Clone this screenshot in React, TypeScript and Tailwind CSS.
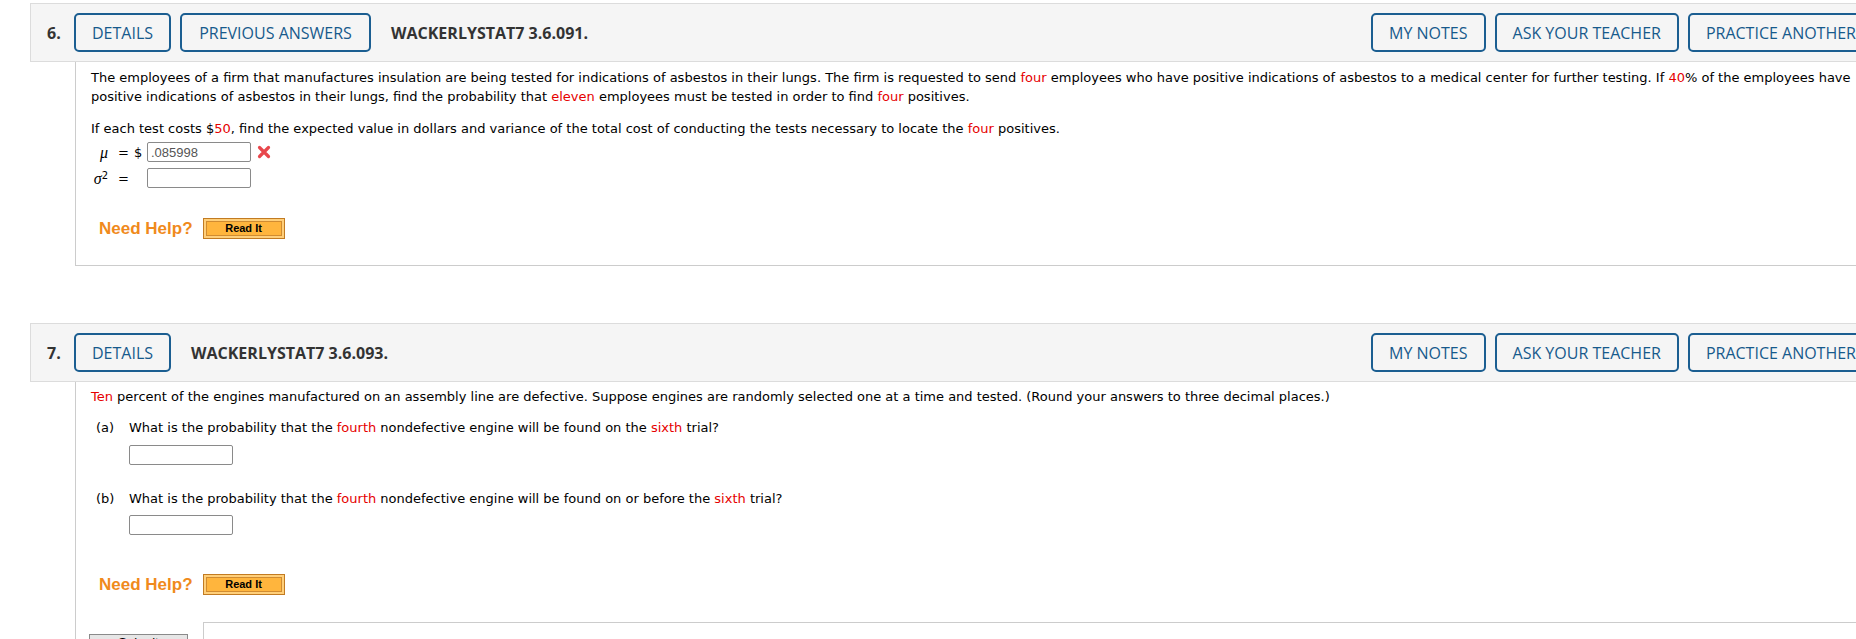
import React from 'react';

const Red = ({ children }: { children: React.ReactNode }) => (
  <span className="text-[#e60000]">{children}</span>
);

const HeadButton = ({ children, className = '' }: { children: React.ReactNode; className?: string }) => (
  <button
    type="button"
    className={`flex h-[39px] items-center justify-center rounded-[5px] border-2 border-[#1b5e91] px-[16px] text-[16px] text-[#175a8c] ${className}`}
  >
    {children}
  </button>
);

const QuestionHeader = ({ num, code, prev }: { num: number; code: string; prev?: boolean }) => (
  <div className="flex h-[59px] items-center border border-[#dcdcdc] bg-[#f5f5f5] pr-[25px] pl-[16px] font-['Open_Sans',sans-serif]">
    <span className="w-[27px] text-[16px] font-bold text-[#333]">{num}.</span>
    <HeadButton>DETAILS</HeadButton>
    {prev && <HeadButton className="ml-[9px] w-[191px]">PREVIOUS ANSWERS</HeadButton>}
    <span className="ml-[20px] text-[16px] font-bold text-[#333]">{code}</span>
    <div className="ml-auto flex gap-[9px]">
      <HeadButton>MY NOTES</HeadButton>
      <HeadButton>ASK YOUR TEACHER</HeadButton>
      <HeadButton>PRACTICE ANOTHER</HeadButton>
    </div>
  </div>
);

const AnswerBox = ({ value = '' }: { value?: string }) => (
  <input
    type="text"
    readOnly
    value={value}
    className="h-[20px] w-[104px] rounded-[2px] border border-[#8a8a8a] px-[3px] font-['Liberation_Sans',sans-serif] text-[13px] text-[#555]"
  />
);

const WrongMark = () => (
  <svg className="ml-[6px] h-[14px] w-[14px]" viewBox="0 0 14 14">
    <path d="M2.5 2.5l9 9M11.5 2.5l-9 9" stroke="#e8474c" strokeWidth={3.2} strokeLinecap="round" />
  </svg>
);

const NeedHelp = ({ className = '' }: { className?: string }) => (
  <div className={`flex items-center pl-[8px] ${className}`}>
    <span className="font-['Liberation_Sans',sans-serif] text-[17px] leading-[20px] font-bold text-[#f08a1c]">
      Need Help?
    </span>
    <span className="ml-[10px] flex h-[21px] w-[82px] border border-[#c27b22] bg-[#ffcf7a] p-[2px]">
      <span className="flex flex-1 items-center justify-center border border-[#d18c31] bg-[#ffb53d] font-['Liberation_Sans',sans-serif] text-[11px] font-bold text-black">
        Read It
      </span>
    </span>
  </div>
);

export default function App() {
  return (
    <div className="h-[639px] w-full overflow-hidden bg-white pt-[3px] pl-[30px]">
      <div className="w-[1870px]">
        {/* question 6 */}
        <QuestionHeader num={6} code="WACKERLYSTAT7 3.6.091." prev />
        <div className="ml-[45px] border-b border-l border-[#cccccc] px-[15px] pt-[6px] pb-[26px] font-['DejaVu_Sans',sans-serif] text-[13px] leading-[19px] text-black">
          <p>
            The employees of a firm that manufactures insulation are being tested for indications of asbestos in
            their lungs. The firm is requested to send <Red>four</Red> employees who have positive indications of
            asbestos to a medical center for further testing. If <Red>40</Red>% of the employees have positive
            indications of asbestos in their lungs, find the probability that <Red>eleven</Red> employees must be
            tested in order to find <Red>four</Red> positives.
          </p>
          <p className="mt-[13px]">
            If each test costs $<Red>50</Red>, find the expected value in dollars and variance of the total cost of
            conducting the tests necessary to locate the <Red>four</Red> positives.
          </p>
          <div className="mt-[1px]">
            <div className="flex h-[26px] items-center">
              <span className="w-[17px] text-right font-['Liberation_Serif',serif] text-[16px] italic">μ</span>
              <span className="ml-[10px] w-[16px]">=</span>
              <span className="w-[13px]">$</span>
              <AnswerBox value=".085998" />
              <WrongMark />
            </div>
            <div className="flex h-[26px] items-center">
              <span className="w-[17px] text-right font-['Liberation_Serif',serif] text-[16px] whitespace-nowrap italic">
                σ<sup className="text-[10px] not-italic font-['DejaVu_Sans',sans-serif]">2</sup>
              </span>
              <span className="ml-[10px] w-[29px]">=</span>
              <AnswerBox />
            </div>
          </div>
          <NeedHelp className="mt-[27px]" />
        </div>

        {/* question 7 */}
        <div className="mt-[57px]">
          <QuestionHeader num={7} code="WACKERLYSTAT7 3.6.093." />
          <div className="ml-[45px] border-l border-[#cccccc] px-[15px] pt-[5px] font-['DejaVu_Sans',sans-serif] text-[13px] leading-[19px] text-black">
            <p>
              <Red>Ten</Red> percent of the engines manufactured on an assembly line are defective. Suppose engines
              are randomly selected one at a time and tested. (Round your answers to three decimal places.)
            </p>
            <div className="mt-[12px] flex pl-[5px]">
              <span className="w-[33px]">(a)</span>
              <span>
                What is the probability that the <Red>fourth</Red> nondefective engine will be found on the{' '}
                <Red>sixth</Red> trial?
              </span>
            </div>
            <div className="mt-[8px] pl-[38px]">
              <AnswerBox />
            </div>
            <div className="mt-[24px] flex pl-[5px]">
              <span className="w-[33px]">(b)</span>
              <span>
                What is the probability that the <Red>fourth</Red> nondefective engine will be found on or before the{' '}
                <Red>sixth</Red> trial?
              </span>
            </div>
            <div className="mt-[7px] pl-[38px]">
              <AnswerBox />
            </div>
            <NeedHelp className="mt-[39px]" />
            <div className="mt-[27px] flex">
              <button
                type="button"
                className="mt-[12px] ml-[-2px] flex h-[24px] w-[99px] items-start border border-[#8a8a8a] bg-[#e6e6e6] px-[8px] pt-[1px] font-['Liberation_Sans',sans-serif] text-[13px] leading-[13px] text-black"
              >
                Submit Answer
              </button>
              <div className="ml-[15px] h-[40px] flex-1 border-t border-l border-[#cccccc]" />
            </div>
          </div>
        </div>
      </div>
    </div>
  );
}
